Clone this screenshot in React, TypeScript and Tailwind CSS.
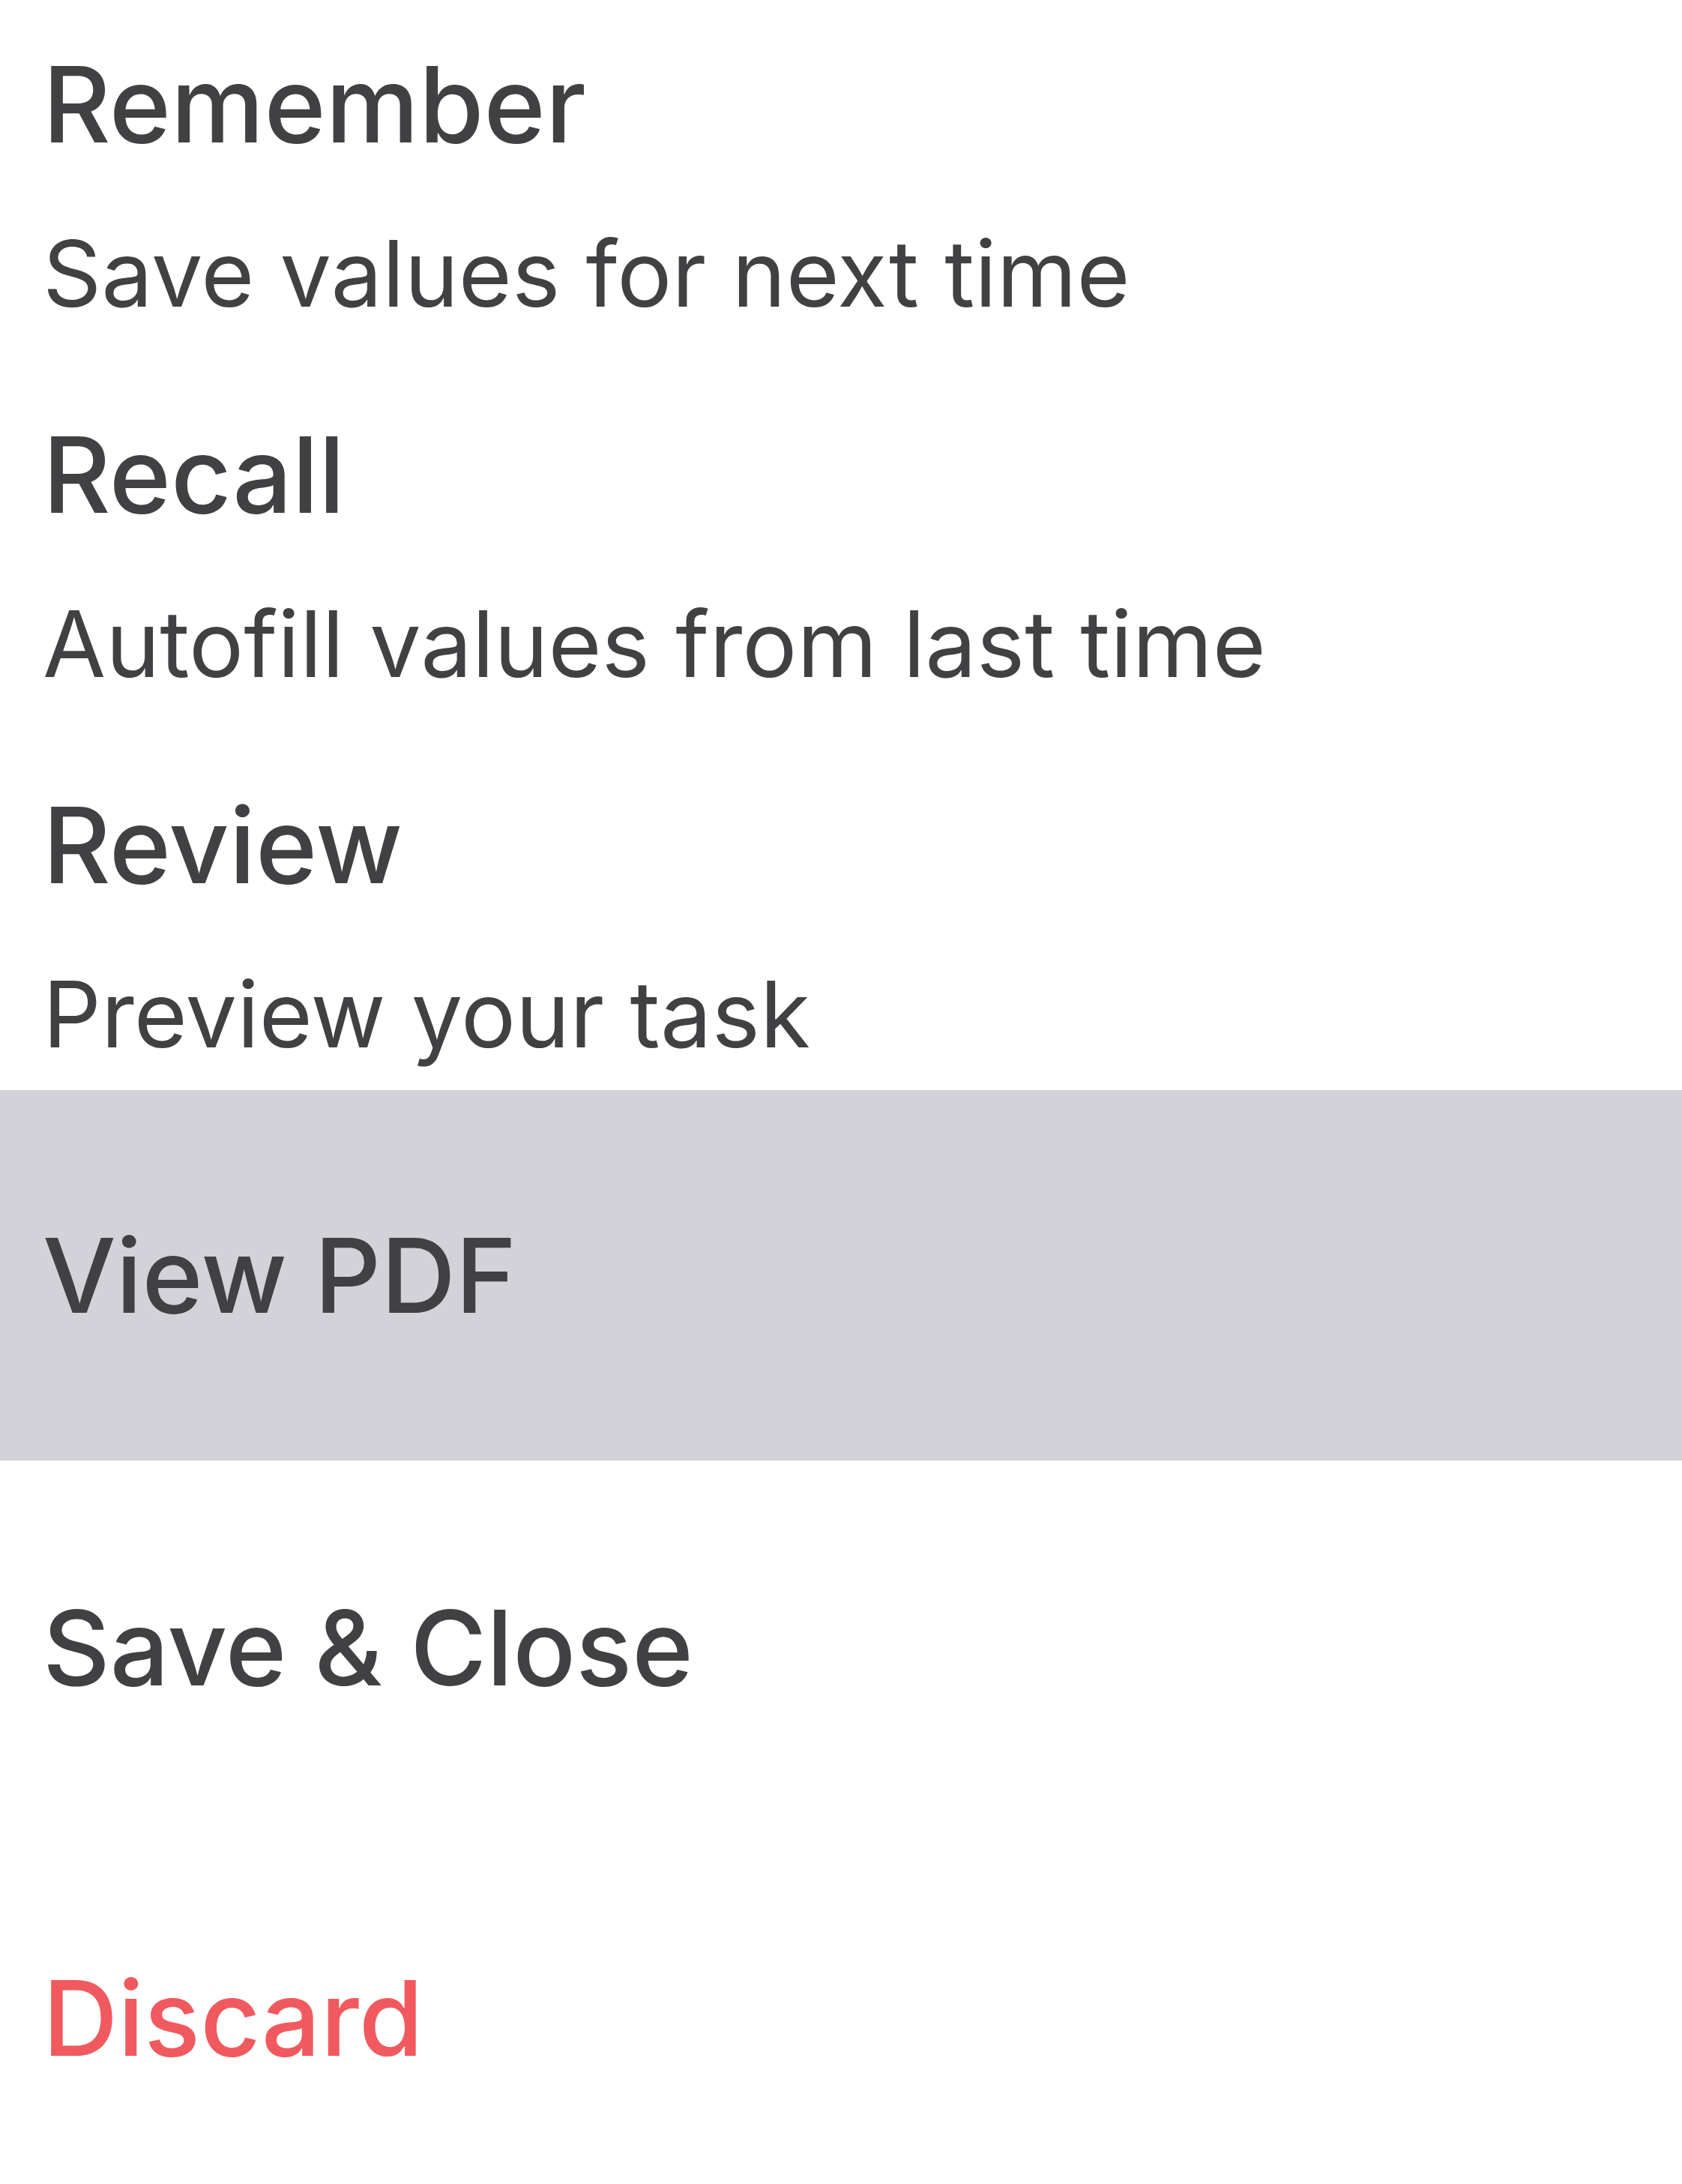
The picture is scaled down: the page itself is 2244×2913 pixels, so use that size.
const rows = [
  { title: 'Remember', subtitle: 'Save values for next time' },
  { title: 'Recall', subtitle: 'Autofill values from last time' },
  { title: 'Review', subtitle: 'Preview your task' },
];

export default function App() {
  return (
    <div className="min-h-[2913px] w-full overflow-hidden bg-white font-['Inter','Roboto',sans-serif] text-[#414143]">
      <div className="-mt-[28px] flex flex-col">
        {rows.map((row) => (
          <div key={row.title} className="flex h-[494px] flex-col px-[57px]">
            <div className="mt-[97px] text-[140px] font-medium leading-[140px]">{row.title}</div>
            <div className="mt-[92px] text-[122px] leading-[128px]">{row.subtitle}</div>
          </div>
        ))}
        <div className="flex h-[494px] items-center bg-[#d3d2d8] px-[57px] text-[138px] font-medium leading-none">
          View PDF
        </div>
        <div className="flex h-[494px] items-center px-[57px] pt-[4px] text-[139px] font-medium leading-none">
          Save &amp; Close
        </div>
        <div className="flex h-[494px] items-center px-[57px] pt-[4px] text-[139px] font-medium leading-none text-[#f05a5f]">
          Discard
        </div>
      </div>
    </div>
  );
}
